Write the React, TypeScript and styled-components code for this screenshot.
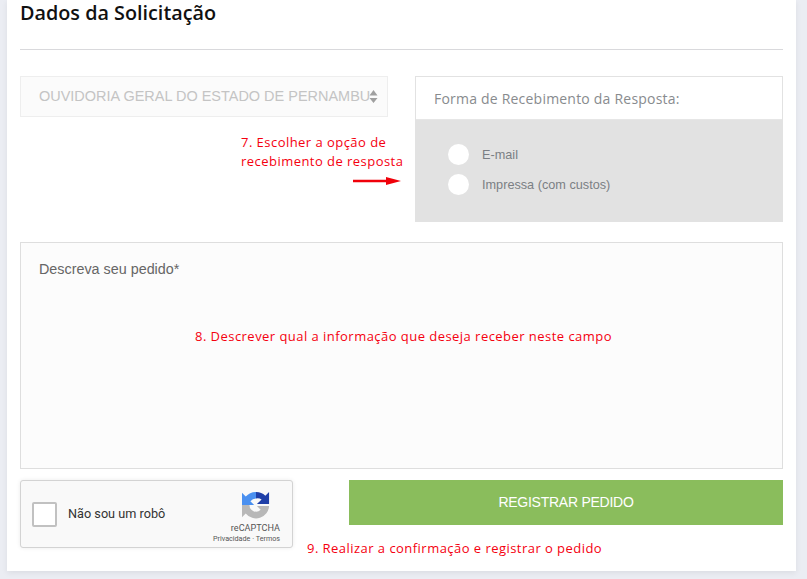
import React from "react";
import styled, { createGlobalStyle } from "styled-components";

const Global = createGlobalStyle`
  html, body { margin: 0; padding: 0; background: #ebedf3; height: 579px; overflow: hidden; }
  #root { height: 579px; }
  * { box-sizing: border-box; }
`;

const Card = styled.main`
  width: 789px;
  height: 571px;
  margin-left: 7px;
  padding: 0 13px;
  background: #fff;
  box-shadow: 0 2px 6px rgba(0, 0, 0, 0.07);
  display: flex;
  flex-direction: column;
`;

const Header = styled.header`
  height: 50px;
  border-bottom: 1px solid #d9d9dc;
  margin-bottom: 26px;
`;

const Title = styled.h1`
  margin: 0;
  font: 600 19.8px/26px "Open Sans", sans-serif;
  color: #111;
`;

const TopRow = styled.section`
  display: grid;
  grid-template-columns: 368px 368px;
  justify-content: space-between;
  height: 146px;
  margin-bottom: 20px;
`;

const LeftColumn = styled.div`
  display: flex;
  flex-direction: column;
`;

const SelectBox = styled.div`
  height: 41px;
  border: 1px solid #eeeeee;
  background: #fbfbfb;
  padding: 0 0 2px 18px;
  display: flex;
  align-items: center;
  position: relative;
`;

const SelectText = styled.span`
  font: 14.47px "Liberation Sans", Arial, sans-serif;
  color: #c4c4c4;
  white-space: nowrap;
`;

const Caret = styled.svg`
  position: absolute;
  right: 9px;
  top: 12px;
`;

const Note = styled.p`
  margin: 0;
  font: 400 13px/19px "Open Sans", sans-serif;
  letter-spacing: 0.46px;
  color: #f5000f;
  white-space: nowrap;
`;

const ChooseNote = styled(Note)`
  margin: 16px 0 0 221px;
`;

const ArrowIcon = styled.svg`
  display: block;
  margin: 5px 0 0 333px;
`;

const Panel = styled.fieldset`
  margin: 0;
  padding: 0;
  border: 1px solid #e2e2e2;
  display: flex;
  flex-direction: column;
`;

const PanelHead = styled.div`
  height: 43px;
  padding: 0 18px;
  display: flex;
  align-items: center;
  border-bottom: 1px solid #e6e6e6;
  font: 400 14px "Open Sans", sans-serif;
  letter-spacing: 0.21px;
  color: #888b8e;
`;

const PanelBody = styled.div`
  flex: 1;
  background: #e2e2e2;
  padding: 24px 32px 0;
  display: flex;
  flex-direction: column;
  gap: 9px;
`;

const RadioRow = styled.label`
  display: flex;
  align-items: center;
  gap: 13px;
  height: 21px;
  font: 12.7px "Liberation Sans", Arial, sans-serif;
  color: #7b7f84;
`;

const RadioDot = styled.span`
  width: 21px;
  height: 21px;
  border-radius: 50%;
  background: #fff;
  flex: none;
`;

const RequestBox = styled.section`
  height: 227px;
  border: 1px solid #dedede;
  background: #fcfcfc;
  padding: 18px 18px;
  position: relative;
  margin-bottom: 11px;
`;

const RequestLabel = styled.div`
  font: 400 14.35px/17px "Liberation Sans", Arial, sans-serif;
  color: #666;
`;

const RequestNote = styled(Note)`
  position: absolute;
  left: 174px;
  top: 84px;
`;

const BottomRow = styled.section`
  display: flex;
  justify-content: space-between;
  align-items: flex-start;
`;

const Captcha = styled.div`
  width: 273px;
  height: 68px;
  border: 1px solid #d3d3d3;
  border-radius: 3px;
  background: #f9f9f9;
  box-shadow: 0 0 4px rgba(0, 0, 0, 0.08);
  display: flex;
  align-items: center;
  padding: 0 12px 0 11px;
`;

const CheckBoxMock = styled.span`
  width: 25px;
  height: 25px;
  border: 2px solid #c1c1c1;
  border-radius: 2px;
  background: #fff;
  flex: none;
`;

const CaptchaLabel = styled.span`
  margin: 0 0 2px 11px;
  font: 400 12.7px Roboto, sans-serif;
  color: #333;
  flex: 1;
`;

const CaptchaBrand = styled.div`
  display: flex;
  flex-direction: column;
  align-items: flex-end;
  width: 70px;
  margin-top: 6px;
`;

const CaptchaMark = styled.svg`
  margin-right: 10px;
`;

const CaptchaName = styled.span`
  font: 400 9.1px/11px Roboto, sans-serif;
  color: #555;
  margin-top: 4px;
`;

const CaptchaLinks = styled.span`
  font: 400 7.2px/10px Roboto, sans-serif;
  color: #555;
  white-space: nowrap;
`;

const ActionColumn = styled.div`
  width: 434px;
  position: relative;
`;

const SubmitButton = styled.button`
  display: block;
  width: 100%;
  height: 45px;
  padding: 0 0 2px;
  border: 0;
  background: #8abd5c;
  color: #fff;
  font: 14px "Liberation Sans", Arial, sans-serif;
  letter-spacing: -0.25px;
`;

const ConfirmNote = styled(Note)`
  position: absolute;
  left: -42px;
  top: 59px;
`;

export default function App() {
  return (
    <>
      <Global />
      <Card>
        <Header>
          <Title>Dados da Solicitação</Title>
        </Header>
        <TopRow>
          <LeftColumn>
            <SelectBox>
              <SelectText>OUVIDORIA GERAL DO ESTADO DE PERNAMBU</SelectText>
              <Caret width="9" height="15" viewBox="0 0 9 15">
                <path d="M4.5 1 L8.5 6.5 H0.5 Z M0.5 9 H8.5 L4.5 14 Z" fill="#a0a0a0" />
              </Caret>
            </SelectBox>
            <ChooseNote>
              7. Escolher a opção de
              <br />
              recebimento de resposta
            </ChooseNote>
            <ArrowIcon width="50" height="10" viewBox="0 0 50 10">
              <path d="M0 5 H34" stroke="#f0000a" strokeWidth="2.4" />
              <path d="M33 1 L48 5 L33 9 Z" fill="#f0000a" />
            </ArrowIcon>
          </LeftColumn>
          <Panel>
            <PanelHead>Forma de Recebimento da Resposta:</PanelHead>
            <PanelBody>
              <RadioRow>
                <RadioDot />
                E-mail
              </RadioRow>
              <RadioRow>
                <RadioDot />
                Impressa (com custos)
              </RadioRow>
            </PanelBody>
          </Panel>
        </TopRow>
        <RequestBox>
          <RequestLabel>Descreva seu pedido*</RequestLabel>
          <RequestNote>8. Descrever qual a informação que deseja receber neste campo</RequestNote>
        </RequestBox>
        <BottomRow>
          <Captcha>
            <CheckBoxMock />
            <CaptchaLabel>Não sou um robô</CaptchaLabel>
            <CaptchaBrand>
              <CaptchaMark width="28" height="28" viewBox="0 0 30 30">
                <path d="M15 1 A14 14 0 0 0 4 6 L0 2 V15 H13 L9 11 A8 8 0 0 1 15 8 Z" fill="#4a90f0" />
                <path d="M15 1 A14 14 0 0 1 25 5 L29 1 V14 H16 L21 9 A8 8 0 0 0 15 8 Z" fill="#1f3fa8" />
                <path d="M0 15 H8 A7 7 0 0 0 20 20 L16 16 H29 A14 14 0 0 1 4 24 L0 28 Z" fill="#b8b8b8" />
              </CaptchaMark>
              <CaptchaName>reCAPTCHA</CaptchaName>
              <CaptchaLinks>Privacidade · Termos</CaptchaLinks>
            </CaptchaBrand>
          </Captcha>
          <ActionColumn>
            <SubmitButton>REGISTRAR PEDIDO</SubmitButton>
            <ConfirmNote>9. Realizar a confirmação e registrar o pedido</ConfirmNote>
          </ActionColumn>
        </BottomRow>
      </Card>
    </>
  );
}
